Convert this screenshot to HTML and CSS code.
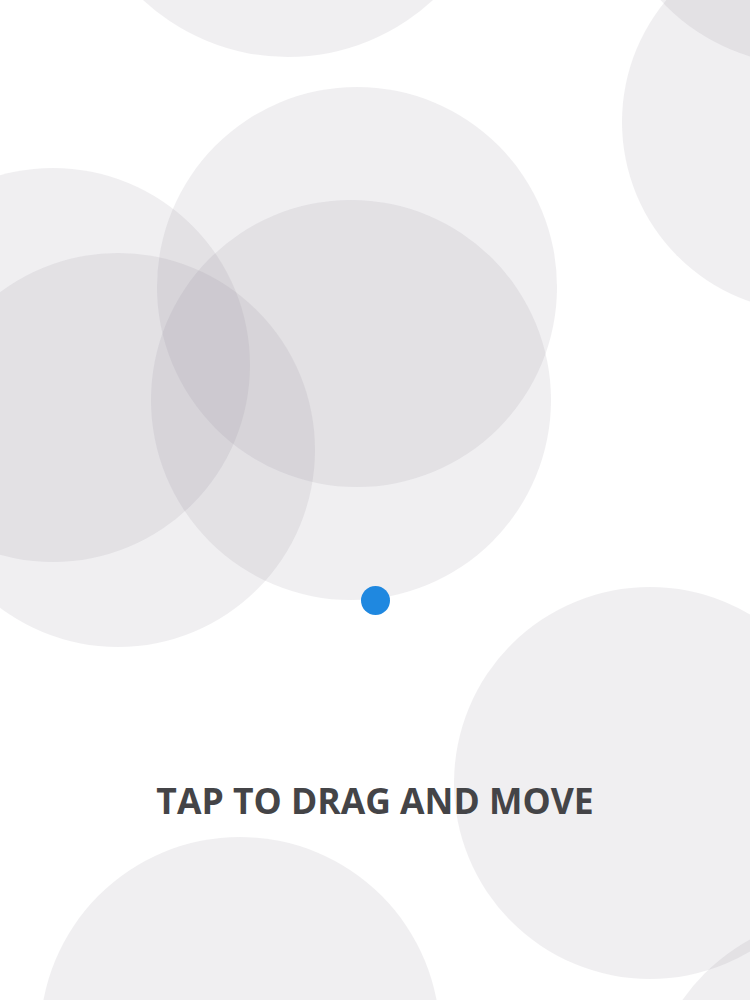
FILE: index.html
```html
<!DOCTYPE html>
<html lang="en">
<head>
<meta charset="utf-8">
<title>Tap to drag and move</title>
<link rel="stylesheet" href="styles.css">
</head>
<body>
<main class="stage">
  <div class="bubble" style="left:75px;top:-369px;width:426px;height:426px"></div>
  <div class="bubble" style="left:622px;top:-68px;width:380px;height:380px"></div>
  <div class="bubble" style="left:608px;top:-335px;width:400px;height:400px"></div>
  <div class="bubble" style="left:157px;top:87px;width:400px;height:400px"></div>
  <div class="bubble" style="left:151px;top:200px;width:400px;height:400px"></div>
  <div class="bubble" style="left:-144px;top:168px;width:394px;height:394px"></div>
  <div class="bubble" style="left:-79px;top:253px;width:394px;height:394px"></div>
  <div class="bubble" style="left:454px;top:587px;width:392px;height:392px"></div>
  <div class="bubble" style="left:40px;top:837px;width:400px;height:400px"></div>
  <div class="bubble" style="left:646px;top:915px;width:400px;height:400px"></div>
  <div class="dot"></div>
  <p class="hint">TAP TO DRAG AND MOVE</p>
</main>
</body>
</html>
```
FILE: styles.css
```css
html, body {
  margin: 0;
  padding: 0;
  background: #ffffff;
}
.stage {
  position: relative;
  width: 750px;
  height: 1000px;
  overflow: hidden;
  display: flex;
  flex-direction: column;
  align-items: center;
  padding-top: 772px;
  box-sizing: border-box;
}
.bubble {
  position: absolute;
  border-radius: 50%;
  background: rgba(140, 134, 150, 0.13);
}
.dot {
  position: absolute;
  left: 361px;
  top: 586px;
  width: 29px;
  height: 29px;
  border-radius: 50%;
  background: #1f88e0;
}
.hint {
  position: relative;
  margin: 0;
  font-family: "Open Sans", "DejaVu Sans", sans-serif;
  font-weight: 700;
  font-size: 35.5px;
  line-height: 56px;
  color: #444447;
  letter-spacing: 0;
}
```
